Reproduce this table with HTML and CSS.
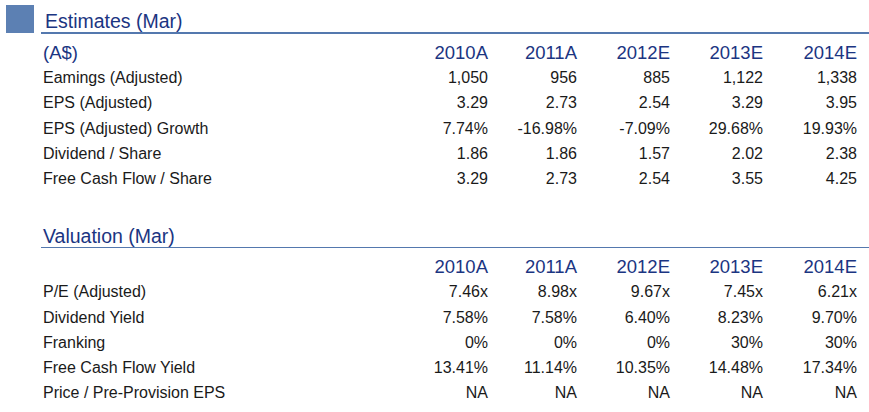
FILE: index.html
```html
<!DOCTYPE html>
<html lang="en">
<head>
<meta charset="utf-8">
<title>Estimates and Valuation</title>
<link rel="stylesheet" href="styles.css">
</head>
<body>
<div class="report">
  <section class="block">
    <div class="title-row">
      <span class="marker"></span>
      <h2 class="title title-thick">Estimates (Mar)</h2>
    </div>
    <div class="table">
      <div class="row head"><span class="label">(A$)</span><span>2010A</span><span>2011A</span><span>2012E</span><span>2013E</span><span>2014E</span></div>
      <div class="row"><span class="label">Eamings (Adjusted)</span><span>1,050</span><span>956</span><span>885</span><span>1,122</span><span>1,338</span></div>
      <div class="row"><span class="label">EPS (Adjusted)</span><span>3.29</span><span>2.73</span><span>2.54</span><span>3.29</span><span>3.95</span></div>
      <div class="row"><span class="label">EPS (Adjusted) Growth</span><span>7.74%</span><span>-16.98%</span><span>-7.09%</span><span>29.68%</span><span>19.93%</span></div>
      <div class="row"><span class="label">Dividend / Share</span><span>1.86</span><span>1.86</span><span>1.57</span><span>2.02</span><span>2.38</span></div>
      <div class="row"><span class="label">Free Cash Flow / Share</span><span>3.29</span><span>2.73</span><span>2.54</span><span>3.55</span><span>4.25</span></div>
    </div>
  </section>
  <section class="block block-valuation">
    <div class="title-row">
      <h2 class="title title-thin">Valuation (Mar)</h2>
    </div>
    <div class="table">
      <div class="row head"><span class="label"></span><span>2010A</span><span>2011A</span><span>2012E</span><span>2013E</span><span>2014E</span></div>
      <div class="row"><span class="label">P/E (Adjusted)</span><span>7.46x</span><span>8.98x</span><span>9.67x</span><span>7.45x</span><span>6.21x</span></div>
      <div class="row"><span class="label">Dividend Yield</span><span>7.58%</span><span>7.58%</span><span>6.40%</span><span>8.23%</span><span>9.70%</span></div>
      <div class="row"><span class="label">Franking</span><span>0%</span><span>0%</span><span>0%</span><span>30%</span><span>30%</span></div>
      <div class="row"><span class="label">Free Cash Flow Yield</span><span>13.41%</span><span>11.14%</span><span>10.35%</span><span>14.48%</span><span>17.34%</span></div>
      <div class="row"><span class="label">Price / Pre-Provision EPS</span><span>NA</span><span>NA</span><span>NA</span><span>NA</span><span>NA</span></div>
    </div>
  </section>
</div>
</body>
</html>
```
FILE: styles.css
```css
html, body {
  margin: 0;
  padding: 0;
  background: #ffffff;
}

body {
  font-family: "Liberation Sans", Arial, sans-serif;
  color: #1a1a1a;
  width: 869px;
  height: 412px;
  overflow: hidden;
}

.report {
  padding-top: 5px;
}

.title-row {
  display: flex;
  align-items: flex-start;
  padding-left: 6px;
}

.block-valuation .title-row {
  padding-left: 41px;
  margin-top: 29px;
}

.marker {
  width: 28px;
  height: 28px;
  background: #5c80b3;
  flex: none;
}

.title {
  flex: 1;
  margin: 0 0 0 7px;
  padding: 5px 0 0 4px;
  font-size: 19.5px;
  line-height: 22px;
  font-weight: normal;
  color: #1b3582;
}

.block-valuation .title {
  margin-left: 0;
  padding-left: 2px;
}

.title-thick {
  border-bottom: 2px solid #5478ae;
}

.title-thin {
  border-bottom: 1px solid #5478ae;
}

.table {
  margin-top: 6px;
}

.row {
  display: grid;
  grid-template-columns: 1fr 91px 89px 93px 93px 94px;
  height: 25.2px;
  align-items: center;
  padding: 0 12px 0 43px;
  font-size: 16px;
  line-height: 25px;
  text-align: right;
  white-space: nowrap;
}

.row .label {
  text-align: left;
}

.row.head {
  font-size: 18.5px;
  color: #1b3582;
}
```
